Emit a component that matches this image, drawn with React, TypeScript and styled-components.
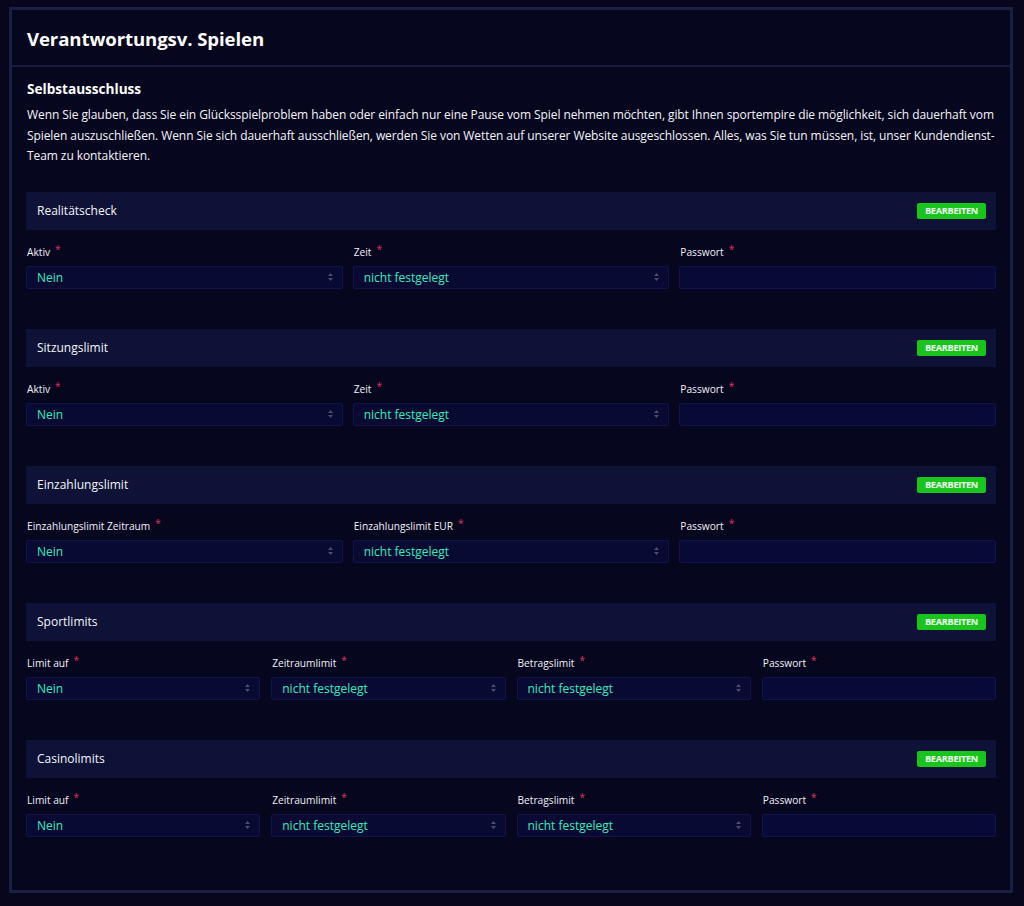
import React from "react";
import styled, { createGlobalStyle } from "styled-components";

const Global = createGlobalStyle`
  html, body { margin: 0; padding: 0; background: #07061d; }
  body { font-family: "Open Sans", "Noto Sans", sans-serif; color: #fff; }
  * { box-sizing: border-box; }
`;

const Page = styled.div`
  padding: 7px 11px 13px 9px;
`;

const Panel = styled.div`
  border: 3px solid #1c1f44;
  background: #07061f;
  height: 886px;
  display: flex;
  flex-direction: column;
`;

const Header = styled.div`
  height: 57px;
  border-bottom: 2px solid #181b3e;
  display: flex;
  align-items: center;
  padding: 0 15px;
`;

const Title = styled.h1`
  margin: 0;
  font-size: 18.6px;
  font-weight: 700;
  color: #fff;
  letter-spacing: -0.1px;
  position: relative;
  top: 1px;
`;

const Body = styled.div`
  padding: 12px 14px 0 14px;
  display: flex;
  flex-direction: column;
`;

const SubTitle = styled.h2`
  margin: 0 0 6px 0;
  font-size: 13.6px;
  font-weight: 700;
  line-height: 20px;
  padding-left: 1px;
`;

const Paragraph = styled.p`
  margin: 0 0 25px 0;
  font-size: 12px;
  letter-spacing: -0.08px;
  line-height: 20.5px;
  color: #f4f4f8;
  padding-left: 1px;
`;

const Section = styled.section`
  margin-bottom: 40px;
`;

const SectionHead = styled.div`
  height: 38px;
  background: #0e1237;
  display: flex;
  align-items: center;
  justify-content: space-between;
  padding: 0 10px 0 11px;
`;

const SectionTitle = styled.span`
  font-size: 12px;
  color: #f4f4f8;
`;

const EditButton = styled.button`
  height: 16px;
  width: 69px;
  padding: 0;
  border: none;
  border-radius: 2px;
  background: #19c41c;
  color: #effff0;
  font-family: "Open Sans", sans-serif;
  font-size: 9.2px;
  font-weight: 700;
  letter-spacing: -0.3px;
  line-height: 16px;
  cursor: pointer;
`;

const Fields = styled.div<{ $cols: number }>`
  display: grid;
  grid-template-columns: repeat(${(p) => p.$cols}, 1fr);
  column-gap: ${(p) => (p.$cols === 4 ? 11 : 10)}px;
  margin-top: 15px;
`;

const Field = styled.div`
  display: flex;
  flex-direction: column;
`;

const Label = styled.label`
  font-size: 10.2px;
  line-height: 15px;
  color: #f0f0f5;
  margin-bottom: 6px;
  padding-left: 1px;
  display: flex;
  align-items: flex-start;
`;

const Star = styled.span`
  color: #e0335a;
  font-size: 10px;
  line-height: 8px;
  margin-left: 5px;
`;

const SelectBox = styled.div`
  height: 23px;
  background: #090a33;
  border: 1px solid #10144a;
  border-radius: 2px;
  display: flex;
  align-items: center;
  justify-content: space-between;
  padding: 0 8px 0 10px;
`;

const Value = styled.span`
  color: #35ebbb;
  font-size: 12px;
`;

const InputBox = styled.div`
  height: 23px;
  background: #080a35;
  border: 1px solid #0f1350;
  border-radius: 2px;
`;

const Arrows = () => (
  <svg width="7" height="10" viewBox="0 0 7 10">
    <path d="M3.5 1 L6 4 H1 Z" fill="#4a4d6a" />
    <path d="M3.5 9 L6 6 H1 Z" fill="#4a4d6a" />
  </svg>
);

type F = { label: string; value?: string };
type S = { title: string; fields: F[] };

const sections: S[] = [
  {
    title: "Realitätscheck",
    fields: [
      { label: "Aktiv", value: "Nein" },
      { label: "Zeit", value: "nicht festgelegt" },
      { label: "Passwort" },
    ],
  },
  {
    title: "Sitzungslimit",
    fields: [
      { label: "Aktiv", value: "Nein" },
      { label: "Zeit", value: "nicht festgelegt" },
      { label: "Passwort" },
    ],
  },
  {
    title: "Einzahlungslimit",
    fields: [
      { label: "Einzahlungslimit Zeitraum", value: "Nein" },
      { label: "Einzahlungslimit EUR", value: "nicht festgelegt" },
      { label: "Passwort" },
    ],
  },
  {
    title: "Sportlimits",
    fields: [
      { label: "Limit auf", value: "Nein" },
      { label: "Zeitraumlimit", value: "nicht festgelegt" },
      { label: "Betragslimit", value: "nicht festgelegt" },
      { label: "Passwort" },
    ],
  },
  {
    title: "Casinolimits",
    fields: [
      { label: "Limit auf", value: "Nein" },
      { label: "Zeitraumlimit", value: "nicht festgelegt" },
      { label: "Betragslimit", value: "nicht festgelegt" },
      { label: "Passwort" },
    ],
  },
];

export default function App() {
  return (
    <>
      <Global />
      <Page>
        <Panel>
          <Header>
            <Title>Verantwortungsv. Spielen</Title>
          </Header>
          <Body>
            <SubTitle>Selbstausschluss</SubTitle>
            <Paragraph>
              Wenn Sie glauben, dass Sie ein Glücksspielproblem haben oder einfach nur eine Pause vom Spiel
              nehmen möchten, gibt Ihnen sportempire die möglichkeit, sich dauerhaft vom Spielen auszuschließen.
              Wenn Sie sich dauerhaft ausschließen, werden Sie von Wetten auf unserer Website ausgeschlossen.
              Alles, was Sie tun müssen, ist, unser Kundendienst-Team zu kontaktieren.
            </Paragraph>
            {sections.map((s) => (
              <Section key={s.title}>
                <SectionHead>
                  <SectionTitle>{s.title}</SectionTitle>
                  <EditButton>BEARBEITEN</EditButton>
                </SectionHead>
                <Fields $cols={s.fields.length}>
                  {s.fields.map((f) => (
                    <Field key={f.label}>
                      <Label>
                        {f.label}
                        <Star>*</Star>
                      </Label>
                      {f.value ? (
                        <SelectBox>
                          <Value>{f.value}</Value>
                          <Arrows />
                        </SelectBox>
                      ) : (
                        <InputBox />
                      )}
                    </Field>
                  ))}
                </Fields>
              </Section>
            ))}
          </Body>
        </Panel>
      </Page>
    </>
  );
}
